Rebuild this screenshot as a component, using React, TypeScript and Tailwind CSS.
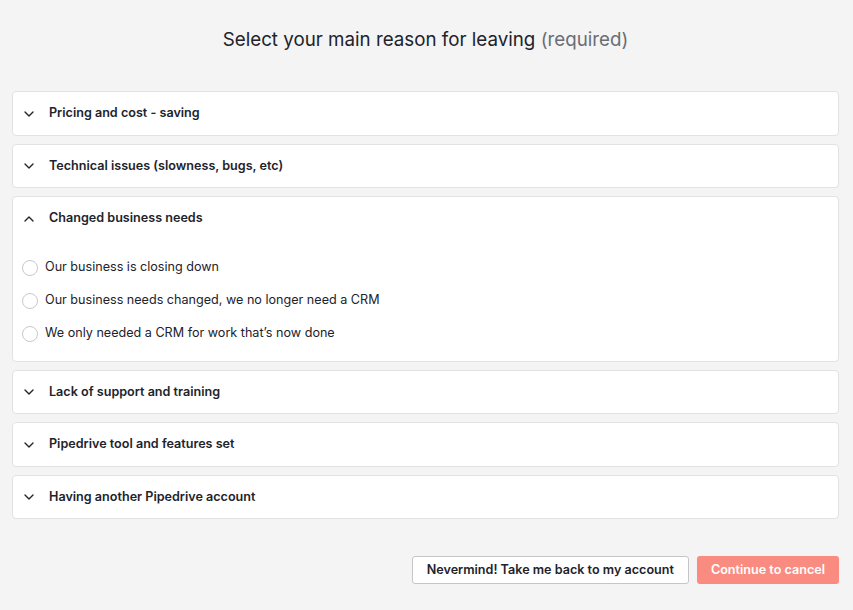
import { ChevronDown, ChevronUp } from "lucide-react";

const reasons = [
  { title: "Pricing and cost - saving" },
  { title: "Technical issues (slowness, bugs, etc)" },
  {
    title: "Changed business needs",
    open: true,
    options: [
      "Our business is closing down",
      "Our business needs changed, we no longer need a CRM",
      "We only needed a CRM for work that’s now done",
    ],
  },
  { title: "Lack of support and training" },
  { title: "Pipedrive tool and features set" },
  { title: "Having another Pipedrive account" },
];

const App = () => {
  return (
    <div className="min-h-[610px] bg-[#f4f4f4] pl-3 pr-[14px] pt-[27px] font-['Inter',sans-serif] text-[#21232c]">
      <h1 className="text-center text-[18.75px] leading-[26px] mb-[38px]">
        Select your main reason for leaving{" "}
        <span className="text-[#6a6d75]">(required)</span>
      </h1>

      <div className="flex flex-col gap-2">
        {reasons.map((r) => (
          <div
            key={r.title}
            className="bg-white border border-[#e2e2e2] rounded-[4px]"
          >
            <div className="flex items-center h-[42.5px] pl-[8px] pt-[1px]">
              {r.open ? (
                <ChevronUp className="w-4 h-4" strokeWidth={2} />
              ) : (
                <ChevronDown className="w-4 h-4" strokeWidth={2} />
              )}
              <span className="ml-[12px] text-[12.6px] font-semibold">
                {r.title}
              </span>
            </div>
            {r.options && (
              <div className="pt-[11.5px] pb-[10.5px] pl-[9px]">
                {r.options.map((o) => (
                  <label
                    key={o}
                    className="flex items-center h-[33px] text-[12.6px]"
                  >
                    <span className="w-4 h-4 rounded-full border border-[#c8c9cc] bg-white" />
                    <span className="ml-[7px]">{o}</span>
                  </label>
                ))}
              </div>
            )}
          </div>
        ))}
      </div>

      <div className="flex justify-end gap-2 mt-[37px]">
        <button className="h-[28px] px-[14px] bg-white border border-[#c6c6c9] rounded-[3px] text-[12.6px] font-semibold">
          Nevermind! Take me back to my account
        </button>
        <button className="h-[28px] px-[14px] bg-[#fa8b80] rounded-[3px] text-[12.6px] font-semibold text-white">
          Continue to cancel
        </button>
      </div>
    </div>
  );
};

export default App;
